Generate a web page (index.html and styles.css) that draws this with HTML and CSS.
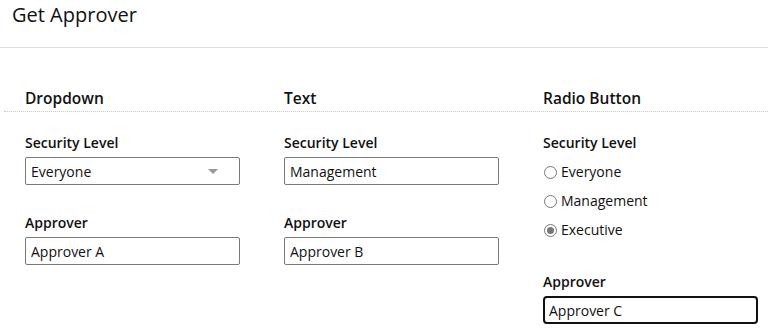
FILE: index.html
```html
<!DOCTYPE html>
<html>
  <head>
    <title>Get Approver</title>
    <link rel="stylesheet" href="styles.css">
  </head>
  <body>
    <header class="page-header">
      <h1 class="page-title">Get Approver</h1>
    </header>

    <div class="section-heads">
      <h2 class="section-title">Dropdown</h2>
      <h2 class="section-title">Text</h2>
      <h2 class="section-title">Radio Button</h2>
    </div>

    <div class="section-body">
      <div class="col">
        <div class="field">
          <label class="field-label">Security Level</label>
          <div class="select-box">
            <span>Everyone</span>
            <span class="select-arrow"></span>
          </div>
        </div>
        <div class="field">
          <label class="field-label">Approver</label>
          <input class="text-box" type="text" value="Approver A" />
        </div>
      </div>

      <div class="col">
        <div class="field">
          <label class="field-label">Security Level</label>
          <input class="text-box" type="text" value="Management" />
        </div>
        <div class="field">
          <label class="field-label">Approver</label>
          <input class="text-box" type="text" value="Approver B" />
        </div>
      </div>

      <div class="col">
        <div class="field">
          <label class="field-label">Security Level</label>
          <div class="radio-list">
            <label class="radio-row"><span class="radio"></span>Everyone</label>
            <label class="radio-row"><span class="radio"></span>Management</label>
            <label class="radio-row"><span class="radio checked"></span>Executive</label>
          </div>
        </div>
        <div class="field field-last">
          <label class="field-label">Approver</label>
          <input class="text-box focused" type="text" value="Approver C" />
        </div>
      </div>
    </div>
  </body>
</html>
```

FILE: styles.css
```css
html {
  background-color: #fff;
}

body {
  margin: 0;
  font-family: "Open Sans", "Noto Sans", sans-serif;
  color: #111;
}

.page-header {
  height: 48px;
  border-bottom: 1px solid #ddd;
  box-sizing: border-box;
}
.page-title {
  margin: 0;
  padding: 2px 12px 0;
  font-size: 20px;
  font-weight: 400;
  line-height: 26px;
}

.section-heads {
  display: grid;
  grid-template-columns: 259px 259px 1fr;
  margin: 40px 0 0 4px;
  padding-left: 21px;
  border-bottom: 1px dotted #c8c8c8;
}
.section-title {
  margin: 0;
  padding-bottom: 3px;
  font-size: 15.5px;
  font-weight: 600;
  line-height: 20px;
}

.section-body {
  display: grid;
  grid-template-columns: 259px 259px 1fr;
  padding-left: 25px;
  padding-top: 21px;
}

.col {
  display: flex;
  flex-direction: column;
  gap: 28px;
}
.col .field-last {
  margin-top: 4px;
}

.field {
  display: flex;
  flex-direction: column;
  gap: 4px;
}
.field-label {
  font-size: 14px;
  font-weight: 600;
  line-height: 20px;
}

.text-box,
.select-box {
  width: 215px;
  height: 28px;
  box-sizing: border-box;
  border: 1px solid #7a7a7a;
  border-radius: 2px;
  padding: 0 5px;
  margin: 0;
  font-family: inherit;
  font-size: 14px;
  color: #111;
  background: #fff;
  outline: none;
}
.text-box.focused {
  border: 2px solid #111;
  border-radius: 4px;
  padding: 0 4px;
}

.select-box {
  display: flex;
  align-items: center;
  justify-content: space-between;
  padding-right: 21px;
}
.select-arrow {
  width: 0;
  height: 0;
  border-left: 5px solid transparent;
  border-right: 5px solid transparent;
  border-top: 5px solid #999;
}

.radio-list {
  display: flex;
  flex-direction: column;
  gap: 9px;
  margin-top: 5px;
}
.radio-row {
  display: flex;
  align-items: center;
  gap: 4px;
  font-size: 14px;
  line-height: 20px;
}
.radio {
  width: 11px;
  height: 11px;
  margin-left: 1px;
  border: 1px solid #777;
  border-radius: 50%;
  background: #fff;
  position: relative;
}
.radio.checked::after {
  content: "";
  position: absolute;
  left: 2px;
  top: 2px;
  width: 7px;
  height: 7px;
  border-radius: 50%;
  background: #777;
}
```
